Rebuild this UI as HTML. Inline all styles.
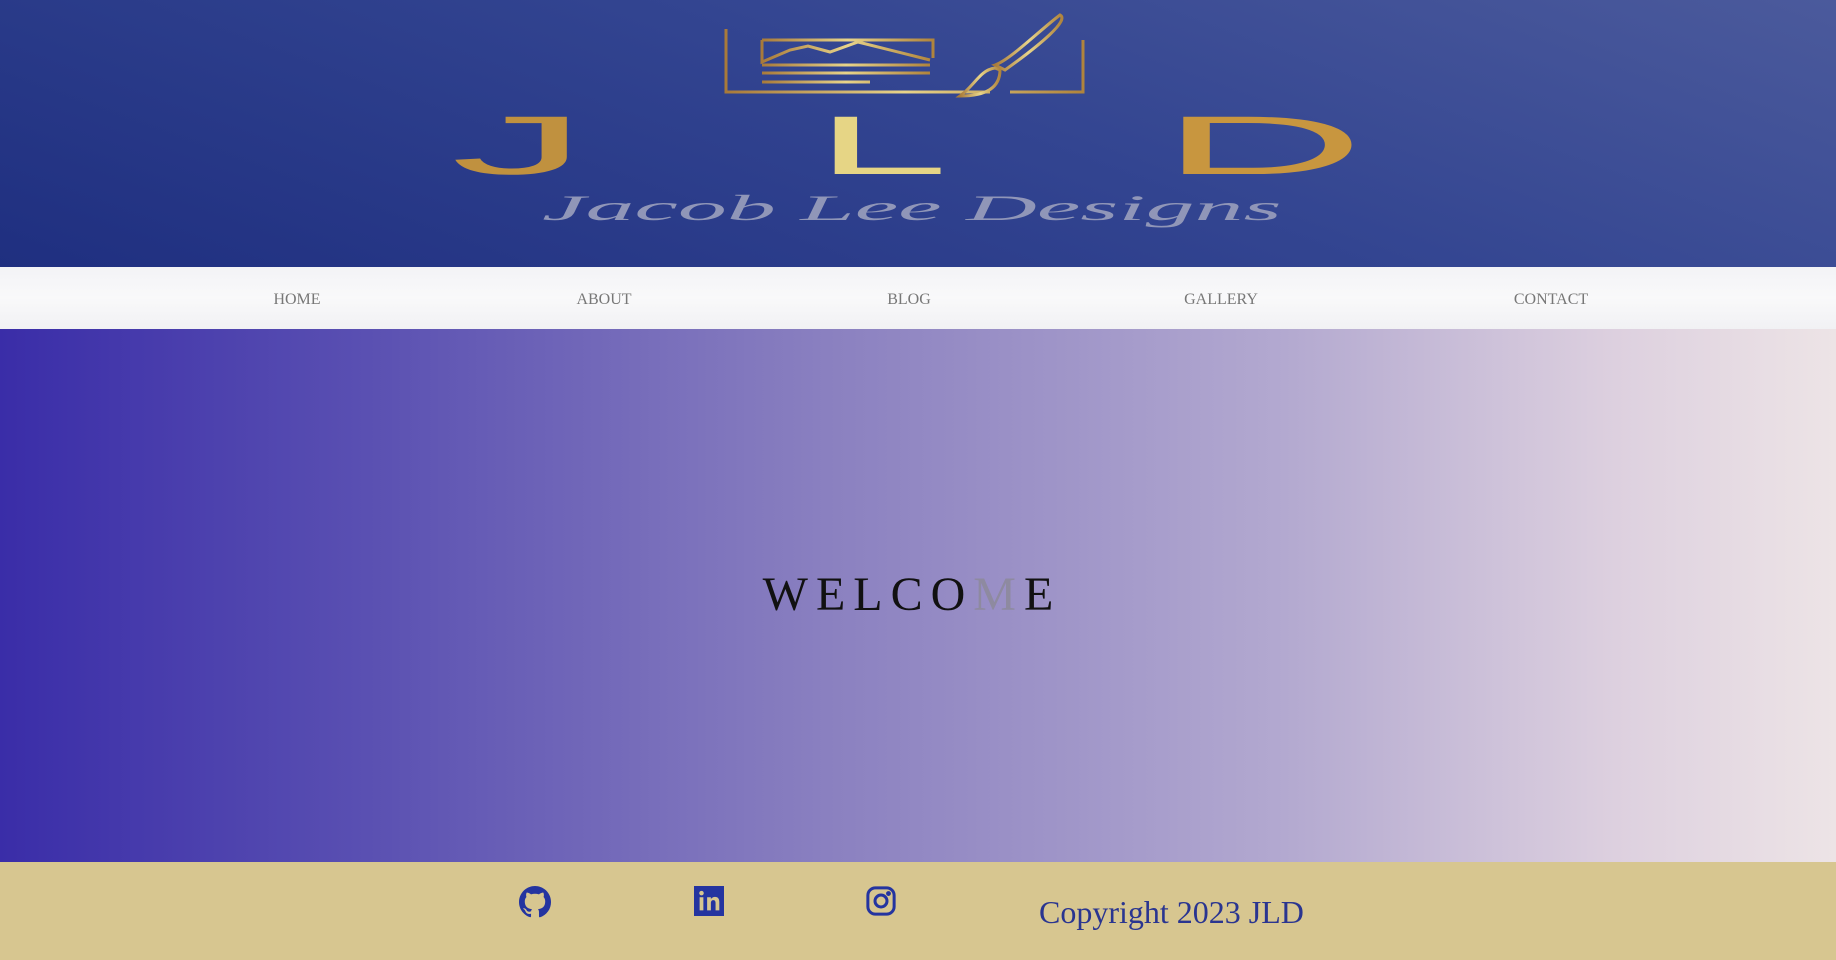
<!DOCTYPE html>
<html><head><meta charset="utf-8"><style>
*{margin:0;padding:0;box-sizing:border-box}
body{width:1836px;height:960px;overflow:hidden;font-family:"Liberation Serif",serif;position:relative}
#hdr{position:absolute;left:0;top:0;width:1836px;height:267px;background:linear-gradient(200deg,#4b5a9c 0%,#334591 45%,#1f2f80 100%)}
#nav{position:absolute;left:0;top:267px;width:1836px;height:62px;background:linear-gradient(#f3f3f6,#f9f9fa 50%,#f1f1f4)}
#nav span{position:absolute;top:24px;font-size:16px;color:#777;transform:translateX(-50%)}
#hero{position:absolute;left:0;top:329px;width:1836px;height:533px;background:linear-gradient(90deg,#3a2da8 0%,#5a50b2 20%,#8a80c0 45%,#b3a9d0 70%,#ddd0df 88%,#ede4e6 100%)}
#wel{position:absolute;left:-10px;width:1836px;top:238px;text-align:center;font-size:48px;letter-spacing:8px;color:#111;padding-left:8px}
#ft{position:absolute;left:0;top:862px;width:1836px;height:98px;background:#d7c690}
.ic{position:absolute;top:24px}
#cp{position:absolute;left:1039px;top:32px;font-size:32px;color:#2a3590}
</style></head><body>
<div id="hdr">
<svg style="position:absolute;left:0;top:0" width="1836" height="267">
<defs><linearGradient id="gd" x1="0" x2="1"><stop offset="0" stop-color="#a87a3a"/><stop offset=".5" stop-color="#e8d48a"/><stop offset="1" stop-color="#b0843c"/></linearGradient></defs>
<g fill="none" stroke="url(#gd)" stroke-width="3">
<path d="M730 20H1020"/><path d="M726 29V92H990M1010 92H1083V40"/><path d="M726 29H1010"/>
<path d="M762 40H933V58M762 40V62L790 50 L808 46 L830 52 L858 42 L930 60"/>
<path d="M762 65H930M762 73H930M762 82H870"/>
<path d="M1060 15C1040 30 1010 60 995 65L1005 70C1040 45 1070 20 1060 15Z"/>
<path d="M995 68C980 70 975 85 960 96C990 96 1000 85 1000 70Z"/>
</g>
<text transform="translate(451 174) scale(3.4 1.04)" font-family="Liberation Sans" font-size="80" fill="#c0913f">J</text>
<text transform="translate(815 174) scale(3 1.04)" font-family="Liberation Sans" font-size="80" fill="#e6d585">L</text>
<text transform="translate(1160 174) scale(3.55 1.04)" font-family="Liberation Sans" font-size="80" fill="#c8963f">D</text>
<text transform="translate(542 220) scale(2.72 1)" font-family="Liberation Serif" font-style="italic" font-size="36" fill="#9096b8">Jacob Lee Designs</text>
</svg>
</div>
<div id="nav"><span style="left:297px">HOME</span><span style="left:604px">ABOUT</span><span style="left:909px">BLOG</span><span style="left:1221px">GALLERY</span><span style="left:1551px">CONTACT</span></div>
<div id="hero"><div id="wel">WELCO<span style="color:#8e8aa0">M</span>E</div></div>
<div id="ft">
<svg class="ic" style="left:519px" width="32" height="32" viewBox="0 0 16 16"><path fill="#2434a0" d="M8 0C3.58 0 0 3.58 0 8c0 3.540 2.29 6.53 5.470 7.59.4.07.55-.17.55-.38v-1.33c-2.23.48-2.7-1.07-2.7-1.07-.36-.92-.89-1.17-.89-1.170-.73-.5.05-.49.05-.49.8.06 1.23.83 1.23.83.71 1.22 1.870.87 2.33.66.07-.52.28-.87.51-1.07-1.78-.2-3.65-.89-3.65-3.95 0-.87.31-1.59.82-2.15-.08-.2-.36-1.02.08-2.12 0 0 .67-.21 2.2.82a7.6 7.6 0 0 1 4 0c1.53-1.04 2.2-.82 2.2-.82.44 1.1.16 1.92.08 2.12.51.56.82 1.27.82 2.15 0 3.07-1.87 3.75-3.65 3.95.29.25.54.73.54 1.48v2.2c0 .21.15.46.55.38A8 8 0 0 0 16 8c0-4.42-3.58-8-8-8z"/></svg>
<svg class="ic" style="left:694px" width="30" height="30" viewBox="0 0 16 16"><rect width="16" height="16" fill="#2434a0"/><rect x="3" y="6" width="2" height="7" fill="#d7c690"/><circle cx="4" cy="3.8" r="1.2" fill="#d7c690"/><path d="M7 6h2v1c.5-.8 1.3-1.2 2.2-1.2 1.6 0 2.3 1 2.3 2.8V13h-2V9c0-1-.4-1.5-1.2-1.5S9 8 9 9v4H7z" fill="#d7c690"/></svg>
<svg class="ic" style="left:866px" width="30" height="30" viewBox="0 0 16 16" fill="none" stroke="#2434a0" stroke-width="1.6"><rect x="1" y="1" width="14" height="14" rx="4"/><circle cx="8" cy="8" r="3.2"/><circle cx="12" cy="4" r=".5" fill="#2434a0"/></svg>
<div id="cp">Copyright 2023 JLD</div>
</div>
</body></html>
